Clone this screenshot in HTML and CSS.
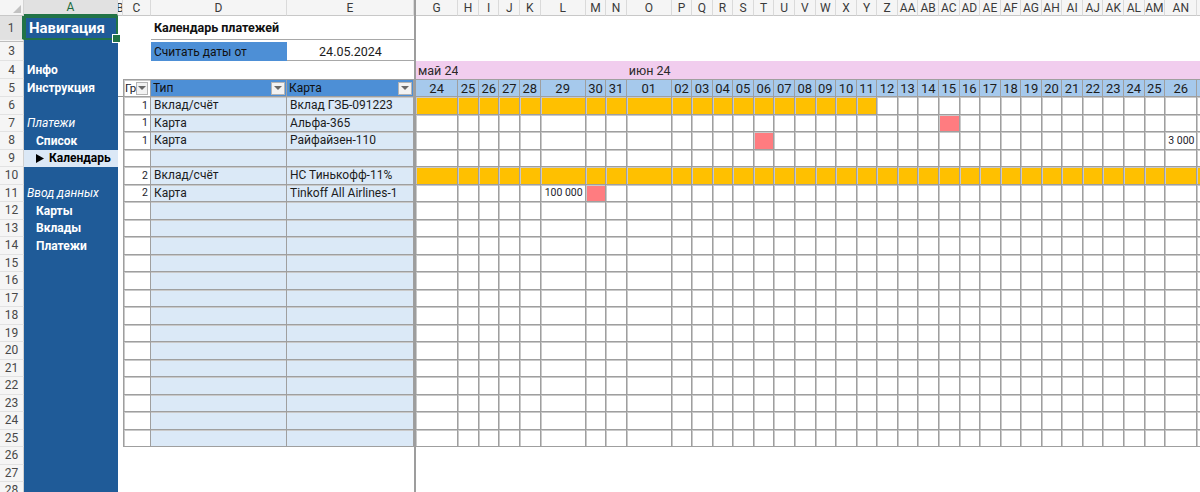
FILE: index.html
```html
<!DOCTYPE html>
<html lang="ru">
<head>
<meta charset="utf-8">
<title>Календарь платежей</title>
<link rel="stylesheet" href="styles.css">
</head>
<body>
<div class="sheet">
  <div class="rh">
    <div class="corner"><svg width="8" height="8" viewBox="0 0 8 8"><polygon points="8,0 8,8 0,8" fill="#c2c2c2"/></svg></div>
    <div class="rn sel">1</div>
    <div class="rn hid"></div>
    <div class="rn">3</div>
    <div class="rn">4</div>
    <div class="rn">5</div>
    <div class="rn">6</div>
    <div class="rn">7</div>
    <div class="rn">8</div>
    <div class="rn">9</div>
    <div class="rn">10</div>
    <div class="rn">11</div>
    <div class="rn">12</div>
    <div class="rn">13</div>
    <div class="rn">14</div>
    <div class="rn">15</div>
    <div class="rn">16</div>
    <div class="rn">17</div>
    <div class="rn">18</div>
    <div class="rn">19</div>
    <div class="rn">20</div>
    <div class="rn">21</div>
    <div class="rn">22</div>
    <div class="rn">23</div>
    <div class="rn">24</div>
    <div class="rn">25</div>
    <div class="rn">26</div>
    <div class="rn">27</div>
    <div class="rn">28</div>
  </div>

  <div class="nav">
    <div class="ch sel">A</div>
    <div class="ni head">Навигация</div>
    <div></div>
    <div></div>
    <div class="ni">Инфо</div>
    <div class="ni">Инструкция</div>
    <div></div>
    <div class="ni it">Платежи</div>
    <div class="ni sub">Список</div>
    <div class="ni cur"><svg class="arrow" width="8" height="9" viewBox="0 0 8 9"><polygon points="0,0 8,4.5 0,9" fill="#000"/></svg>Календарь</div>
    <div></div>
    <div class="ni it">Ввод данных</div>
    <div class="ni sub">Карты</div>
    <div class="ni sub">Вклады</div>
    <div class="ni sub">Платежи</div>
  </div>

  <div class="colb">
    <div class="ch">B</div>
    <div></div><div></div><div></div><div></div>
    <div class="frzh"></div>
  </div>

  <div class="left">
    <div class="ch">C</div><div class="ch">D</div><div class="ch">E</div>

    <div></div><div class="cap">Календарь платежей</div>
    <div class="sp3"></div>
    <div></div><div class="lbl">Считать даты от</div><div class="date">24.05.2024</div>
    <div class="sp3"></div>

    <div class="th c"><span class="tx">Гр</span><span class="dd"></span></div>
    <div class="th"><span class="tx">Тип</span><span class="dd"></span></div>
    <div class="th"><span class="tx">Карта</span><span class="dd"></span></div>

    <div class="t c n">1</div><div class="t">Вклад/счёт</div><div class="t">Вклад ГЗБ-091223</div>
    <div class="t c n">1</div><div class="t">Карта</div><div class="t">Альфа-365</div>
    <div class="t c n">1</div><div class="t">Карта</div><div class="t">Райфайзен-110</div>
    <div class="t c n"></div><div class="t"></div><div class="t"></div>
    <div class="t c n">2</div><div class="t">Вклад/счёт</div><div class="t">НС Тинькофф-11%</div>
    <div class="t c n">2</div><div class="t">Карта</div><div class="t">Tinkoff All Airlines-1</div>
    <div class="t c n"></div><div class="t"></div><div class="t"></div>
    <div class="t c n"></div><div class="t"></div><div class="t"></div>
    <div class="t c n"></div><div class="t"></div><div class="t"></div>
    <div class="t c n"></div><div class="t"></div><div class="t"></div>
    <div class="t c n"></div><div class="t"></div><div class="t"></div>
    <div class="t c n"></div><div class="t"></div><div class="t"></div>
    <div class="t c n"></div><div class="t"></div><div class="t"></div>
    <div class="t c n"></div><div class="t"></div><div class="t"></div>
    <div class="t c n"></div><div class="t"></div><div class="t"></div>
    <div class="t c n"></div><div class="t"></div><div class="t"></div>
    <div class="t c n"></div><div class="t"></div><div class="t"></div>
    <div class="t c n"></div><div class="t"></div><div class="t"></div>
    <div class="t c n"></div><div class="t"></div><div class="t"></div>
    <div class="t c n"></div><div class="t"></div><div class="t"></div>
  </div>

  <div class="frz"></div>

  <div class="gantt" id="gantt"></div>
</div>
<script src="script.js"></script>
</body>
</html>
```

FILE: styles.css
```css
* { box-sizing: border-box; }
html, body { margin: 0; padding: 0; }
body {
  width: 1200px;
  height: 492px;
  overflow: hidden;
  background: #fff;
  font-family: Roboto, "Liberation Sans", Arial, sans-serif;
  font-size: 12px;
  color: #1c1c1c;
}
.sheet {
  --rows: 16px 24px 2px 19px 18px 18px repeat(23, 17.5px);
  --grid: #9f9f9f;
  --grid2: #c9c9c9;
  display: flex;
  align-items: flex-start;
  height: 492px;
  overflow: hidden;
}
.rh, .nav, .colb, .left, .gantt {
  display: grid;
  grid-template-rows: var(--rows);
  flex: none;
}

/* row headers */
.rh { width: 24px; grid-template-columns: 24px; background: #f5f5f5; }
.corner {
  display: flex; align-items: flex-end; justify-content: flex-end;
  padding: 0 2px 2px 0;
  border-bottom: 1px solid #c8c8c8;
  border-right: 1px solid #d4d4d4;
}
.rn {
  display: flex; align-items: center; justify-content: center;
  color: #484848; font-size: 12px;
  border-bottom: 1px solid #e2e2e2;
  border-right: 1px solid #d0d0d0;
}
.rn.sel { background: #e1e1e1; border-right: 2px solid #217346; }
.rn.hid { border-bottom: 1px solid #bdbdbd; }

/* column headers */
.ch {
  display: flex; align-items: center; justify-content: center;
  background: #f5f5f5; color: #3a3a3a; font-size: 12px;
  border-right: 1px solid #dadada;
  border-bottom: 1px solid #c8c8c8;
  overflow: hidden; white-space: nowrap;
}
.ch.sel { background: #e1e1e1; color: #1d6b3f; border-bottom: 2px solid #217346; }

/* navigation column A */
.nav { width: 94px; grid-template-columns: 94px; background: #1f5b98; color: #fff; }
.ni {
  display: flex; align-items: center;
  padding-left: 3px;
  font-weight: 700; font-size: 12px;
  white-space: nowrap;
}
.ni.head {
  position: relative;
  font-size: 15px;
  padding-left: 3px;
  border: 2px solid #217346;
}
.ni.head::after {
  content: "";
  position: absolute;
  right: -5px; bottom: -5px;
  width: 7px; height: 7px;
  background: #217346;
  border: 1px solid #fff;
}
.ni.it { font-style: italic; font-weight: 400; }
.ni.sub { padding-left: 12px; }
.ni.cur { background: #dbe8f6; color: #000; padding-left: 12px; gap: 5px; }

/* column B */
.colb { width: 5px; grid-template-columns: 5px; }
.frzh { border-bottom: 1px solid #8f8f8f; }

/* left table C:E */
.left { width: 291px; grid-template-columns: 28px 136px 127px; }
.cap {
  grid-column: span 2;
  display: flex; align-items: center;
  padding-left: 3px;
  font-weight: 700; font-size: 12.5px; color: #111;
  border-bottom: 1px solid #a8a8a8;
}
.sp3 { grid-column: span 3; }
.lbl {
  display: flex; align-items: center;
  padding-left: 3px;
  background: #4d8fd6;
  color: #111;
}
.date {
  display: flex; align-items: center; justify-content: center;
  font-size: 12.5px;
  border-bottom: 1px solid #a8a8a8;
}
.th {
  display: flex; align-items: center;
  padding: 0 1px 0 2px;
  background: #4d8fd6; color: #111;
  border-top: 1px solid var(--grid);
  border-right: 1px solid var(--grid);
  border-bottom: 1px solid var(--grid);
  white-space: nowrap; overflow: hidden;
}
.th.c { border-left: 1px solid var(--grid); padding-left: 1px; }
.th.c .tx { font-size: 11.5px; letter-spacing: -0.4px; }
.tx { flex: 1 1 auto; min-width: 0; overflow: hidden; }
.dd {
  flex: none;
  width: 14px; height: 13px;
  display: flex; align-items: center; justify-content: center;
  background: #f2f2f2;
  border: 1px solid #b4b4b4;
}
.th.c .dd { width: 12px; }
.dd::before {
  content: "";
  border-left: 4px solid transparent;
  border-right: 4px solid transparent;
  border-top: 4px solid #686868;
}
.t {
  display: flex; align-items: center;
  padding: 0 2px 0 3px;
  background: #dbe9f7;
  border-right: 1px solid var(--grid);
  border-bottom: 1px solid var(--grid);
  box-shadow: inset 0 1px 0 var(--grid2);
  white-space: nowrap; overflow: hidden;
}
.t.c { border-left: 1px solid var(--grid); }
.t.n { justify-content: flex-end; padding-right: 2px; }

/* freeze line */
.frz { width: 2px; flex: none; align-self: stretch; background: #9d9d9d; }

/* gantt */
.gantt {
  grid-template-columns: 42.3px repeat(4, 20.6px) 45px repeat(2, 20.6px) 44.8px repeat(24, 20.57px) 32.3px 30px;
}
.gsp { grid-column: 1 / -1; }
.m {
  display: flex; align-items: center;
  padding-left: 2px;
  background: #f1cdee;
  font-size: 12.5px; color: #2a2a2a;
  white-space: nowrap;
}
.d {
  display: flex; align-items: center; justify-content: center;
  background: #a6c9ec;
  border-top: 1px solid var(--grid);
  border-right: 1px solid var(--grid);
  border-bottom: 1px solid var(--grid);
  font-size: 13px; color: #1c1c1c;
}
.c {
  display: flex; align-items: center; justify-content: flex-end;
  padding-right: 2px;
  background: #fff;
  border-right: 1px solid var(--grid);
  border-bottom: 1px solid var(--grid);
  box-shadow: inset 1px 1px 0 var(--grid2);
  font-size: 10.5px; color: #1c1c2c;
  white-space: nowrap;
}
.c.o { background: #ffc000; }
.c.p { background: #ff7c80; }
```

FILE: script.js
```js
(function () {
  var g = document.getElementById('gantt');
  var letters = ['G','H','I','J','K','L','M','N','O','P','Q','R','S','T','U','V','W','X','Y','Z',
    'AA','AB','AC','AD','AE','AF','AG','AH','AI','AJ','AK','AL','AM','AN','AO'];
  var days = [];
  var d;
  for (d = 24; d <= 31; d++) days.push(String(d));
  for (d = 1; d <= 27; d++) days.push((d < 10 ? '0' : '') + d);
  var months = { 0: 'май 24', 8: 'июн 24' };
  var n = letters.length;

  function add(cls, text) {
    var e = document.createElement('div');
    e.className = cls;
    if (text) e.textContent = text;
    g.appendChild(e);
    return e;
  }
  function range(a, b) { var r = []; for (var i = a; i <= b; i++) r.push(i); return r; }

  var rows = [
    { o: range(0, 18) },
    { p: [22] },
    { p: [13], v: { 33: '3 000' } },
    {},
    { o: range(0, n - 1) },
    { p: [6], v: { 5: '100 000' } }
  ];
  while (rows.length < 20) rows.push({});

  var i, r;
  for (i = 0; i < n; i++) add('ch', letters[i]);
  add('gsp'); add('gsp'); add('gsp');
  for (i = 0; i < n; i++) add('m', months[i] || '');
  for (i = 0; i < n; i++) add('d', days[i]);
  for (r = 0; r < rows.length; r++) {
    var row = rows[r];
    for (i = 0; i < n; i++) {
      var cls = 'c';
      if (row.o && row.o.indexOf(i) >= 0) cls += ' o';
      if (row.p && row.p.indexOf(i) >= 0) cls += ' p';
      add(cls, row.v && row.v[i] ? row.v[i] : '');
    }
  }
})();
```
